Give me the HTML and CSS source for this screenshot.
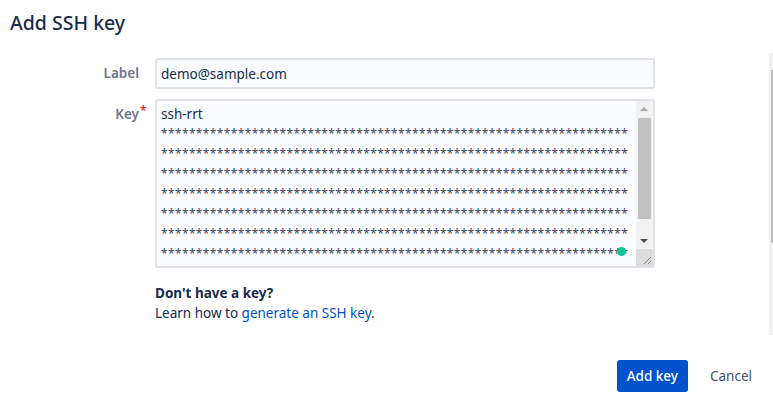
FILE: index.html
```html
<!DOCTYPE html>
<html lang="en">
<head>
<meta charset="utf-8">
<title>Add SSH key</title>
<link rel="stylesheet" href="styles.css">
</head>
<body>
<div class="page">
  <div class="main">
    <h1 class="title">Add SSH key</h1>
    <form class="form">
      <div class="row">
        <label class="label" for="label-input">Label</label>
        <div class="field input"><span class="value">demo@sample.com</span></div>
      </div>
      <div class="row">
        <label class="label">Key<span class="req">*</span></label>
        <div class="field textarea">
          <div class="ta-text">
            <div class="ta-line">ssh-rrt</div>
            <div class="ta-line stars">*******************************************************************</div>
            <div class="ta-line stars">*******************************************************************</div>
            <div class="ta-line stars">*******************************************************************</div>
            <div class="ta-line stars">*******************************************************************</div>
            <div class="ta-line stars">*******************************************************************</div>
            <div class="ta-line stars">*******************************************************************</div>
            <div class="ta-line stars">*******************************************************************</div>
            <span class="dot"></span>
          </div>
          <div class="ta-scroll">
            <div class="sb-arrow up"></div>
            <div class="sb-track"><div class="sb-thumb"></div></div>
            <div class="sb-arrow down"></div>
            <div class="sb-corner">
              <svg width="10" height="10" viewBox="0 0 10 10"><path d="M9 2 L2 9 M9 6 L6 9" stroke="#8a8a8a" stroke-width="1" fill="none"/></svg>
            </div>
          </div>
        </div>
      </div>
      <div class="help">
        <div class="help-title">Don't have a key?</div>
        <div class="help-text">Learn how to <a href="#" class="link">generate an SSH key</a>.</div>
      </div>
      <div class="footer">
        <button type="button" class="btn primary">Add key</button>
        <button type="button" class="btn subtle">Cancel</button>
      </div>
    </form>
  </div>
  <div class="gutter"><div class="page-track"><div class="page-thumb"></div></div></div>
</div>
</body>
</html>
```

FILE: styles.css
```css
html, body {
  margin: 0;
  padding: 0;
  background: #ffffff;
}
body {
  font-family: "Noto Sans", "Open Sans", sans-serif;
  font-size: 13.5px;
  color: #172b4d;
}
.page {
  display: flex;
  width: 773px;
  height: 407px;
  overflow: hidden;
}
.main {
  flex: 1;
  display: flex;
  flex-direction: column;
}
.title {
  margin: 10px 0 0 10px;
  font-size: 19.5px;
  line-height: 26px;
  font-weight: 500;
  color: #172b4d;
}
.form {
  margin-top: 22px;
  display: flex;
  flex-direction: column;
}
.row {
  display: flex;
  align-items: flex-start;
  margin-bottom: 10px;
}
.label {
  width: 139px;
  margin-right: 16px;
  text-align: right;
  font-weight: 600;
  color: #6b778c;
  line-height: 20px;
  padding-top: 5px;
  position: relative;
}
.req {
  position: absolute;
  top: 2px;
  left: 100%;
  margin-left: 1px;
  color: #de350b;
  font-size: 12px;
}
.field {
  box-sizing: border-box;
  width: 500px;
  border: 2px solid #dfe1e6;
  border-radius: 3px;
  background: #fafbfc;
}
.input {
  height: 31px;
  padding: 4px 4px;
  line-height: 20px;
}
.textarea {
  height: 169px;
  display: flex;
}
.ta-text {
  flex: 1;
  position: relative;
  padding: 3px 4px;
  line-height: 20px;
  overflow: hidden;
}
.ta-line {
  white-space: pre;
  height: 20px;
}
.stars {
  font-size: 12px;
  letter-spacing: 0.36px;
  color: #3a4760;
  line-height: 20px;
}
.dot {
  position: absolute;
  left: 460px;
  top: 146px;
  width: 9px;
  height: 9px;
  border-radius: 50%;
  background: #15c39a;
}
.ta-scroll {
  width: 16px;
  display: flex;
  flex-direction: column;
  background: #f1f1f1;
  margin-right: 1px;
}
.sb-arrow {
  height: 16px;
  display: flex;
  justify-content: center;
  align-items: center;
}
.sb-arrow.up::before {
  content: "";
  border-left: 4px solid transparent;
  border-right: 4px solid transparent;
  border-bottom: 4px solid #a3a3a3;
}
.sb-arrow.down::before {
  content: "";
  border-left: 4px solid transparent;
  border-right: 4px solid transparent;
  border-top: 4px solid #505050;
}
.sb-track {
  flex: 1;
  padding: 1px 1px 14px 2px;
}
.sb-thumb {
  height: 100%;
  background: #c1c1c1;
}
.sb-corner {
  height: 17px;
  background: #dcdcdc;
  display: flex;
  align-items: flex-end;
  justify-content: flex-end;
  margin-right: -1px;
}
.sb-corner svg {
  display: block;
  margin: 0 1px 1px 0;
}
.help {
  margin: 5px 0 0 155px;
  line-height: 20px;
}
.help-title {
  font-weight: 700;
}
.link {
  color: #0052cc;
  text-decoration: none;
}
.footer {
  display: flex;
  justify-content: flex-end;
  align-items: center;
  margin-top: 37px;
  padding-right: 7px;
  gap: 12px;
}
.btn {
  font-family: inherit;
  font-size: 13.5px;
  height: 32px;
  border: none;
  border-radius: 3px;
  padding: 0 10px;
  cursor: pointer;
}
.primary {
  background: #0052cc;
  color: #ffffff;
  font-weight: 500;
}
.subtle {
  background: transparent;
  color: #42526e;
}
.gutter {
  width: 4px;
  flex: none;
}
.page-track {
  margin-top: 53px;
  height: 282px;
  background: #f1f1f1;
  padding: 17px 0 0 2px;
  box-sizing: border-box;
}
.page-thumb {
  height: 173px;
  background: #c1c1c1;
}
```
